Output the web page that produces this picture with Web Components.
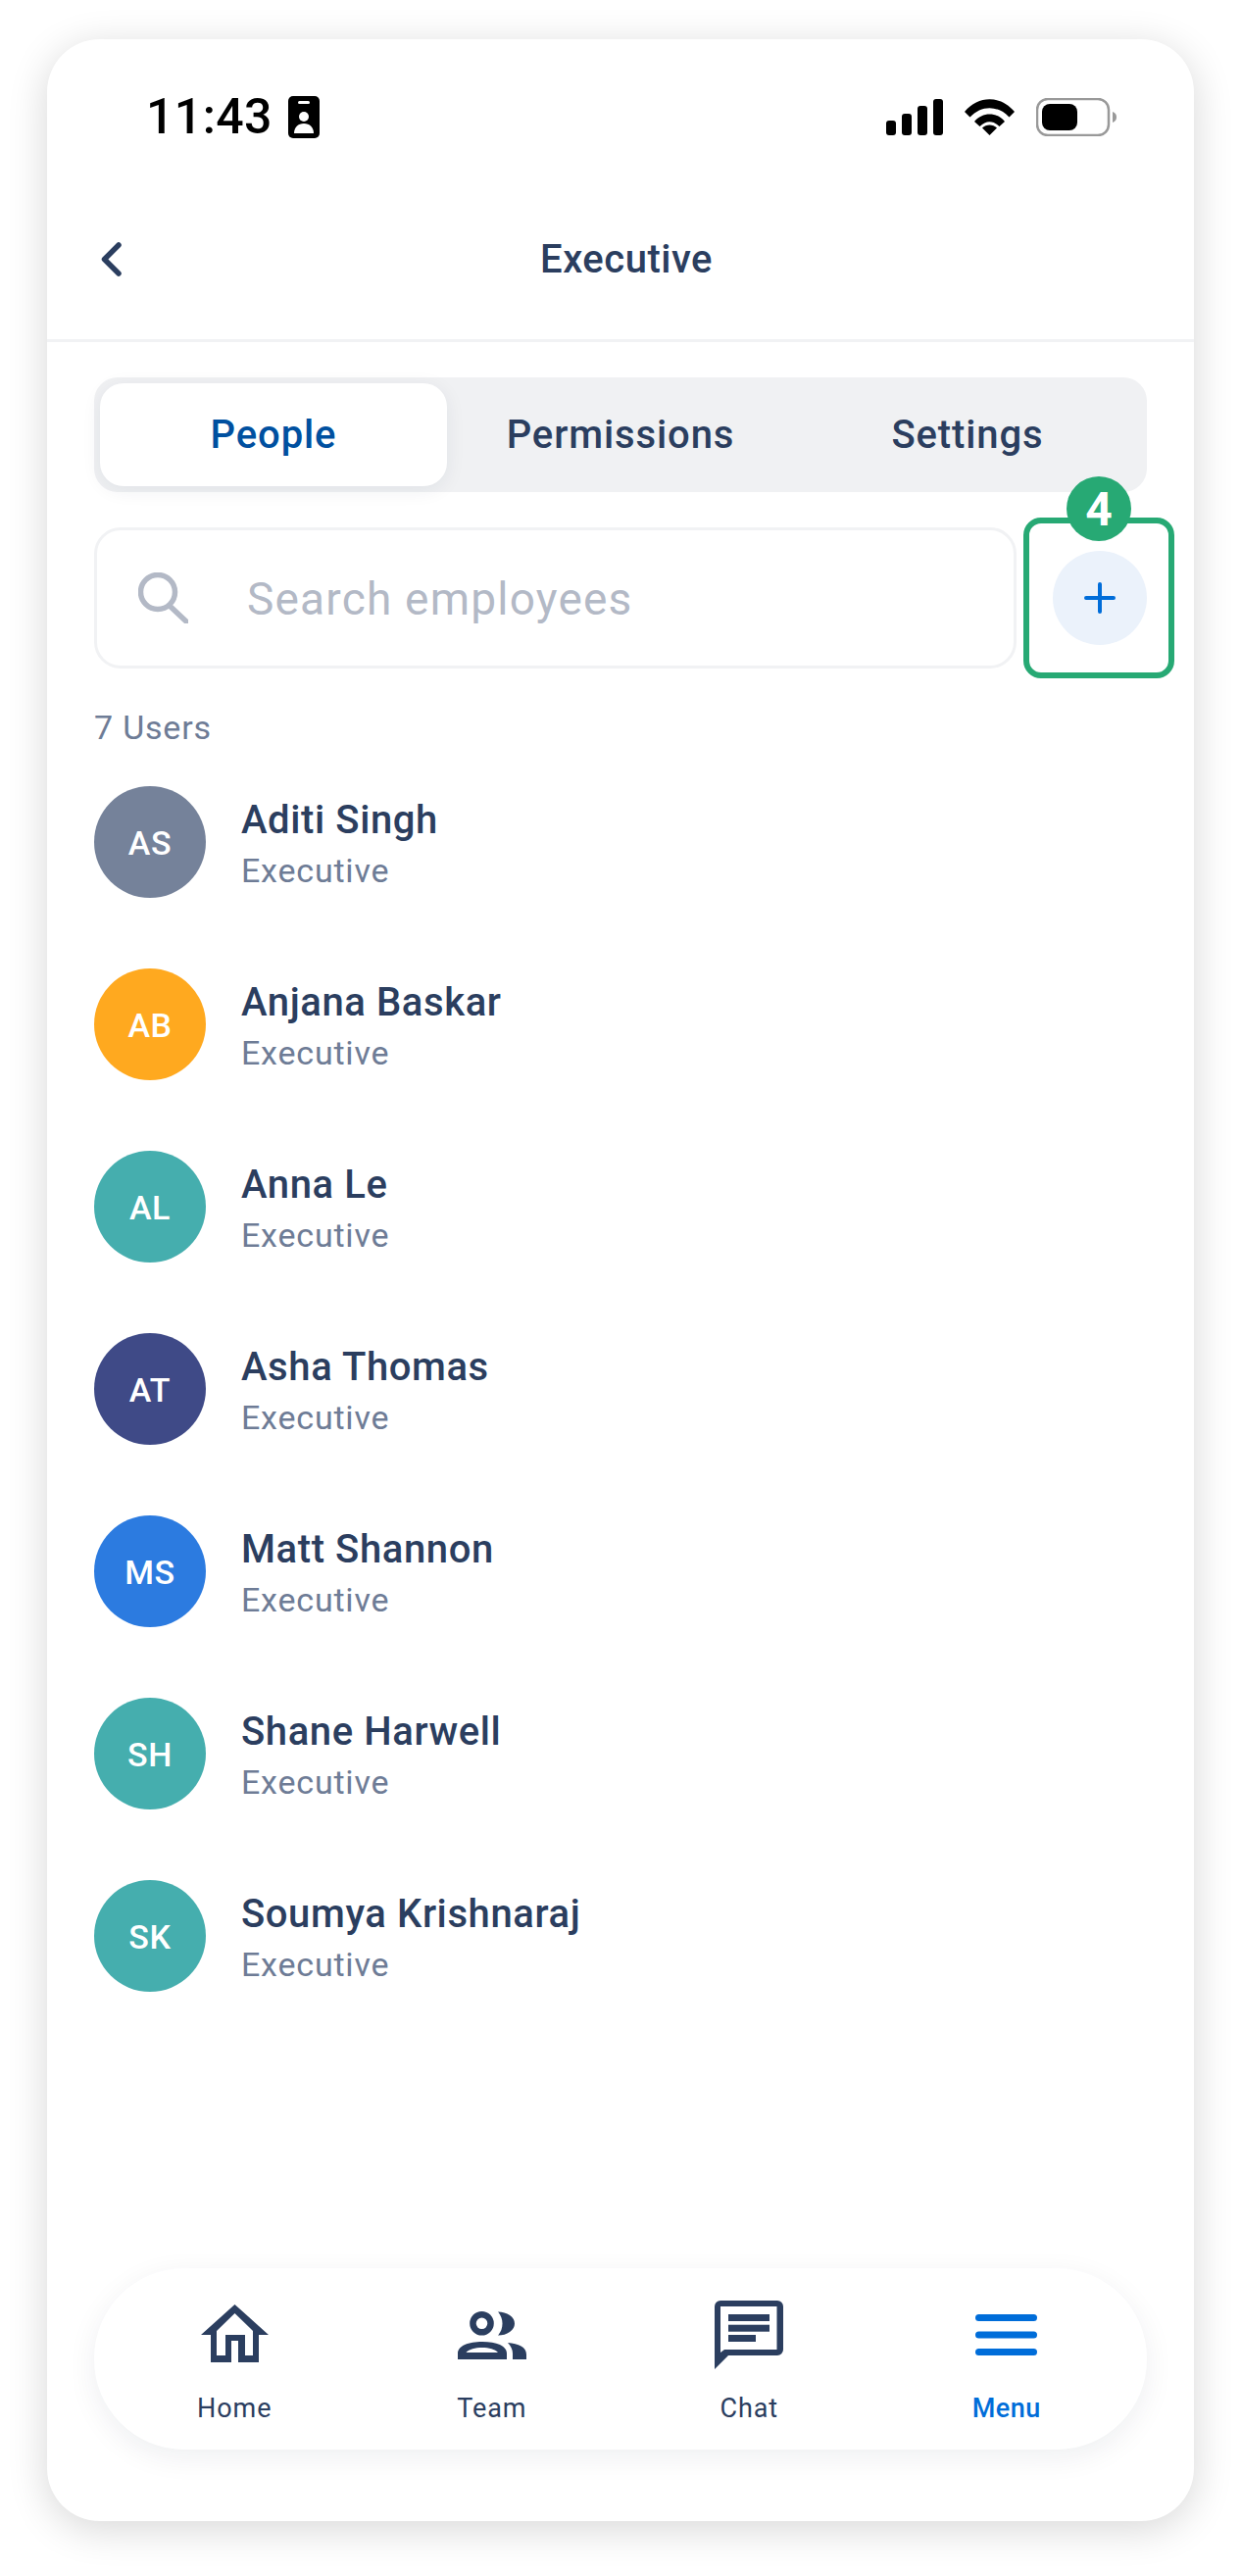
<!DOCTYPE html>
<html lang="en">
<head>
<meta charset="utf-8">
<title>Executive</title>
<style>
    html, body { margin: 0; padding: 0; background: #fff; }
    body { font-family: Roboto, sans-serif; color: #2b3e5f; }
</style>
</head>
<body>
<phone-frame>
    <status-bar></status-bar>
    <title-bar label="Executive"></title-bar>
    <tab-switch></tab-switch>
    <search-row></search-row>
    <user-list></user-list>
    <bottom-nav></bottom-nav>
</phone-frame>

<script>
class PhoneFrame extends HTMLElement {
    connectedCallback() {
        this.attachShadow({ mode: 'open' });
        this.shadowRoot.innerHTML = `
            <style>
                :host {
                    display: block;
                    width: 1266px;
                    height: 2628px;
                    padding: 40px 48px 56px 48px;
                    box-sizing: border-box;
                    overflow: hidden;
                }
                .screen {
                    height: 100%;
                    background: #fff;
                    border-radius: 54px;
                    box-shadow: 0 8px 40px rgba(0, 0, 0, 0.16);
                    display: flex;
                    flex-direction: column;
                }
            </style>
            <div class="screen"><slot></slot></div>
        `;
    }
}

class StatusBar extends HTMLElement {
    connectedCallback() {
        this.attachShadow({ mode: 'open' });
        this.shadowRoot.innerHTML = `
            <style>
                :host {
                    display: flex;
                    align-items: center;
                    justify-content: space-between;
                    height: 158px;
                    padding: 0 79px 0 101px;
                    box-sizing: border-box;
                    color: #000;
                }
                .left { display: flex; align-items: center; gap: 16px; }
                .time { font-size: 50px; font-weight: 500; line-height: 58px; letter-spacing: 0.4px; }
                .right { display: flex; align-items: center; gap: 22px; }
                svg { display: block; }
            </style>
            <div class="left">
                <span class="time">11:43</span>
                <svg width="32" height="43" viewBox="0 0 32 43">
                    <rect width="32" height="43" rx="5" fill="#000"/>
                    <rect x="10" y="5" width="12" height="3" rx="1.5" fill="#fff"/>
                    <circle cx="16" cy="21" r="5" fill="#fff"/>
                    <path d="M6 38c0-6 4-10 10-10s10 4 10 10z" fill="#fff"/>
                </svg>
            </div>
            <div class="right">
                <svg width="58" height="37" viewBox="0 0 58 37" fill="#000">
                    <rect x="0" y="22" width="10" height="15" rx="3"/>
                    <rect x="16" y="15" width="10" height="22" rx="3"/>
                    <rect x="32" y="7" width="10" height="30" rx="3"/>
                    <rect x="48" y="0" width="10" height="37" rx="3"/>
                </svg>
                <svg width="51" height="37" viewBox="0 0 51 37" fill="#000">
                    <path d="M0 13C14 -4 37 -4 51 13L45.500 18.500C34 6 17 6 5.500 18.500Z"/>
                    <path d="M10 23C18 13 33 13 41 23L35.500 28C29 21.500 22 21.500 15.500 28Z"/>
                    <path d="M18 29.500C22 25.500 29 25.500 33 29.500L25.500 37Z"/>
                </svg>
                <svg width="82" height="39" viewBox="0 0 82 39">
                    <rect x="1" y="1" width="73" height="37" rx="11" fill="#fff" stroke="#999" stroke-width="2.500"/>
                    <rect x="6" y="6" width="36" height="27" rx="8" fill="#000"/>
                    <path d="M78 14c3 1 4 3 4 5.500s-1 4.500-4 5.500z" fill="#999"/>
                </svg>
            </div>
        `;
    }
}

class TitleBar extends HTMLElement {
    connectedCallback() {
        this.attachShadow({ mode: 'open' });
        this.shadowRoot.innerHTML = `
            <style>
                :host {
                    display: grid;
                    grid-template-columns: 1fr auto 1fr;
                    align-items: center;
                    height: 130px;
                    padding-bottom: 18px;
                    padding-left: 55px;
                    border-bottom: 3px solid #f1f2f4;
                }
                svg { display: block; margin-top: 2px; }
                h1 {
                    margin: 0 43px 0 0;
                    padding-top: 2px;
                    font-size: 40px;
                    font-weight: 500;
                    letter-spacing: 0.5px;
                    color: #2b3e5f;
                }
            </style>
            <svg width="21" height="35" viewBox="0 0 21 35" fill="none" stroke="#2b3e5f" stroke-width="5.500" stroke-linecap="round" stroke-linejoin="round">
                <path d="M18 3L3.500 17.500 18 32"/>
            </svg>
            <h1>${this.getAttribute('label')}</h1>
        `;
    }
}

class TabSwitch extends HTMLElement {
    connectedCallback() {
        this.attachShadow({ mode: 'open' });
        this.shadowRoot.innerHTML = `
            <style>
                :host {
                    display: grid;
                    grid-template-columns: repeat(3, 1fr);
                    margin: 36px 48px 0;
                    height: 117px;
                    padding: 6px;
                    box-sizing: border-box;
                    background: #f0f1f3;
                    border-radius: 24px;
                }
                div {
                    display: flex;
                    align-items: center;
                    justify-content: center;
                    font-size: 40px;
                    font-weight: 500;
                    letter-spacing: 0.9px;
                    border-radius: 24px;
                    color: #2b3e5f;
                }
                .on {
                    background: #fff;
                    color: #0050a0;
                    box-shadow: 0 4px 20px rgba(20, 40, 70, 0.07);
                }
            </style>
            <div class="on">People</div>
            <div>Permissions</div>
            <div>Settings</div>
        `;
    }
}

class SearchRow extends HTMLElement {
    connectedCallback() {
        this.attachShadow({ mode: 'open' });
        this.shadowRoot.innerHTML = `
            <style>
                :host {
                    display: flex;
                    position: relative;
                    margin: 36px 48px 0;
                    height: 144px;
                }
                .field {
                    width: 941px;
                    box-sizing: border-box;
                    display: flex;
                    align-items: center;
                    padding-left: 42px;
                    gap: 60px;
                    border: 3px solid #f1f2f4;
                    border-radius: 27px;
                    background: #fff;
                }
                .hint {
                    padding-top: 2px;
                    font-size: 46px;
                    letter-spacing: 1.200px;
                    color: #b3b9c6;
                }
                svg { display: block; flex: none; }
                .add {
                    position: absolute;
                    left: 978px;
                    top: 24px;
                    width: 96px;
                    height: 96px;
                    border-radius: 50%;
                    background: #ebf2fb;
                    display: flex;
                    align-items: center;
                    justify-content: center;
                }
                .mark {
                    position: absolute;
                    left: 948px;
                    top: -10px;
                    width: 154px;
                    height: 164px;
                    box-sizing: border-box;
                    border: 6px solid #27a974;
                    border-radius: 18px;
                }
                .badge {
                    position: absolute;
                    left: 992px;
                    top: -52px;
                    width: 66px;
                    height: 66px;
                    box-sizing: border-box;
                    padding-top: 1px;
                    border-radius: 50%;
                    background: #27a974;
                    color: #fff;
                    font-size: 48px;
                    font-weight: 700;
                    line-height: 66px;
                    text-align: center;
                }
            </style>
            <div class="field">
                <svg width="51" height="52" viewBox="0 0 51 52" fill="none" stroke="#b3b9c6" stroke-linecap="round">
                    <circle cx="20" cy="20" r="17.500" stroke-width="5.500"/>
                    <path d="M32 34l17 16" stroke-width="5.500"/>
                </svg>
                <span class="hint">Search employees</span>
            </div>
            <div class="mark"></div>
            <div class="add">
                <svg width="32" height="32" viewBox="0 0 32 32" stroke="#006dd9" stroke-width="4" stroke-linecap="round">
                    <path d="M16 2v28M2 16h28"/>
                </svg>
            </div>
            <div class="badge">4</div>
        `;
    }
}

class UserRow extends HTMLElement {
    connectedCallback() {
        this.attachShadow({ mode: 'open' });
        const name = this.getAttribute('name');
        const initials = this.getAttribute('initials');
        const color = this.getAttribute('color');
        this.shadowRoot.innerHTML = `
            <style>
                :host {
                    display: flex;
                    align-items: center;
                    gap: 36px;
                    height: 186px;
                }
                .avatar {
                    width: 114px;
                    height: 114px;
                    box-sizing: border-box;
                    padding-top: 2px;
                    border-radius: 50%;
                    display: flex;
                    align-items: center;
                    justify-content: center;
                    color: #fff;
                    font-size: 34px;
                    font-weight: 500;
                    letter-spacing: 0.6px;
                    background: ${color};
                }
                .text { padding-top: 4px; }
                .name {
                    font-size: 40px;
                    font-weight: 500;
                    letter-spacing: 0.6px;
                    line-height: 50px;
                    color: #2b3e5f;
                }
                .role {
                    font-size: 34px;
                    letter-spacing: 0.8px;
                    line-height: 44px;
                    margin-top: 4px;
                    color: #6e7c96;
                }
            </style>
            <div class="avatar">${initials}</div>
            <div class="text">
                <div class="name">${name}</div>
                <div class="role">Executive</div>
            </div>
        `;
    }
}

class UserList extends HTMLElement {
    connectedCallback() {
        this.attachShadow({ mode: 'open' });
        const users = [
            ['Aditi Singh', 'AS', '#75829a'],
            ['Anjana Baskar', 'AB', '#ffa91f'],
            ['Anna Le', 'AL', '#45aeae'],
            ['Asha Thomas', 'AT', '#3f4a87'],
            ['Matt Shannon', 'MS', '#2c7be0'],
            ['Shane Harwell', 'SH', '#45aeae'],
            ['Soumya Krishnaraj', 'SK', '#45aeae']
        ];
        this.shadowRoot.innerHTML = `
            <style>
                :host {
                    display: block;
                    flex: 1;
                    margin: 0 48px;
                }
                .count {
                    font-size: 34px;
                    letter-spacing: 0.8px;
                    line-height: 38px;
                    margin-top: 41px;
                    margin-bottom: 5px;
                    color: #6e7c96;
                }
            </style>
            <div class="count">7 Users</div>
            ${users.map(u => `<user-row name="${u[0]}" initials="${u[1]}" color="${u[2]}"></user-row>`).join('')}
        `;
    }
}

class BottomNav extends HTMLElement {
    connectedCallback() {
        this.attachShadow({ mode: 'open' });
        this.shadowRoot.innerHTML = `
            <style>
                :host {
                    display: grid;
                    grid-template-columns: repeat(4, 1fr);
                    height: 185px;
                    margin: 0 48px 73px;
                    padding: 0 12px;
                    background: #fff;
                    border-radius: 92px;
                    box-shadow: 0 8px 30px rgba(20, 30, 50, 0.07);
                }
                .item {
                    display: flex;
                    flex-direction: column;
                    align-items: center;
                    font-size: 27px;
                    letter-spacing: 0.9px;
                    color: #2b3e5f;
                }
                .icon {
                    height: 110px;
                    margin-top: 13px;
                    margin-bottom: 4px;
                    display: flex;
                    align-items: center;
                }
                .item span { line-height: 33px; }
                .on { color: #006dd9; font-weight: 500; letter-spacing: 0.5px; }
                svg { display: block; }
                .home { margin-top: -3px; }
            </style>
            <div class="item">
                <div class="icon">
                    <svg class="home" width="69" height="59" viewBox="0 0 69 59" fill="#2b3e5f">
                        <path fill-rule="evenodd" d="M34.500 0L69 31H59V59H38V37H31V59H10V31H0ZM34.500 9L16 27V52H25V31H45V52H53V27Z"/>
                    </svg>
                </div>
                <span>Home</span>
            </div>
            <div class="item">
                <div class="icon">
                    <svg width="70" height="49" viewBox="0 0 70 49" fill="#2b3e5f">
                        <path fill-rule="evenodd" d="M24.500 0a12.300 12.300 0 1 1 0 24.600a12.300 12.300 0 0 1 0-24.600ZM24.500 6.500a5.800 5.800 0 1 0 0 11.600a5.800 5.800 0 0 0 0-11.600Z"/>
                        <path d="M41 0.500a17 12 0 0 1 0 24c3-3.500 4.500-7.500 4.500-12s-1.500-8.500-4.500-12Z"/>
                        <path fill-rule="evenodd" d="M0 49v-6c0-8 11-12 25-12s25 4 25 12v6ZM8.500 42h32.500c-3-3.500-9-5-16.200-5s-13.300 1.500-16.300 5Z"/>
                        <path d="M51 32c11 1 19 4 19 12v5H56v-6c0-4-2-8-5-11Z"/>
                    </svg>
                </div>
                <span>Team</span>
            </div>
            <div class="item">
                <div class="icon">
                    <svg width="70" height="70" viewBox="0 0 70 70" fill="#2b3e5f">
                        <path fill-rule="evenodd" d="M6 0H64a6 6 0 0 1 6 6V50a6 6 0 0 1-6 6H14L0 70V6a6 6 0 0 1 6-6ZM6 6V53L10 50H63.500V6Z"/>
                        <rect x="14" y="14" width="42" height="7"/>
                        <rect x="14" y="24.700" width="42" height="7"/>
                        <rect x="14" y="35" width="28" height="7"/>
                    </svg>
                </div>
                <span>Chat</span>
            </div>
            <div class="item on">
                <div class="icon">
                    <svg width="63" height="42" viewBox="0 0 63 42" fill="#006dd9">
                        <rect width="63" height="7" rx="3.500"/>
                        <rect y="17.500" width="63" height="7" rx="3.500"/>
                        <rect y="35" width="63" height="7" rx="3.500"/>
                    </svg>
                </div>
                <span>Menu</span>
            </div>
        `;
    }
}

customElements.define('phone-frame', PhoneFrame);
customElements.define('status-bar', StatusBar);
customElements.define('title-bar', TitleBar);
customElements.define('tab-switch', TabSwitch);
customElements.define('search-row', SearchRow);
customElements.define('user-row', UserRow);
customElements.define('user-list', UserList);
customElements.define('bottom-nav', BottomNav);
</script>
</body>
</html>
